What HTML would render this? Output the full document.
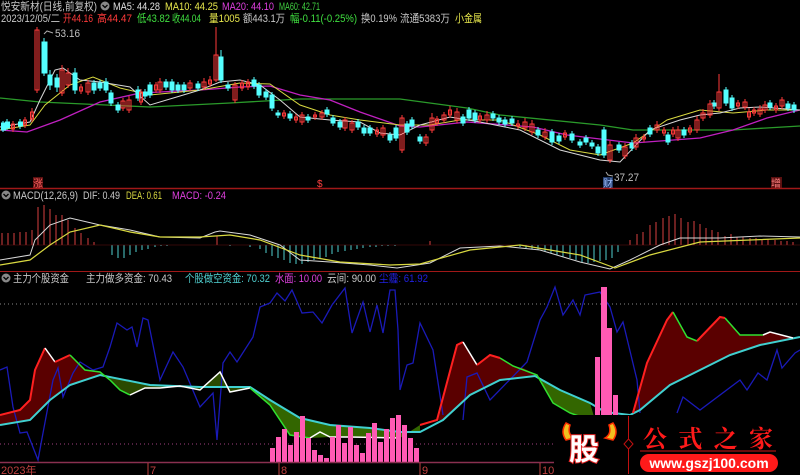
<!DOCTYPE html>
<html><head><meta charset="utf-8"><style>
html,body{margin:0;padding:0;background:#000;width:800px;height:475px;overflow:hidden}
svg{display:block}
text{font-family:"Liberation Sans","Noto Sans CJK SC",sans-serif}
</style></head><body>
<svg width="800" height="475" viewBox="0 0 800 475" xmlns="http://www.w3.org/2000/svg" font-size="11">
<rect width="800" height="475" fill="#000"/>
<!-- header -->
<g lengthAdjust="spacingAndGlyphs">
<text x="1" y="10" fill="#c8c8c8" textLength="96" lengthAdjust="spacingAndGlyphs">悦安新材(日线,前复权)</text>
<text x="113" y="10" fill="#e0e0e0" textLength="47" lengthAdjust="spacingAndGlyphs">MA5: 44.28</text>
<text x="165" y="10" fill="#e8e84c" textLength="53" lengthAdjust="spacingAndGlyphs">MA10: 44.25</text>
<text x="222" y="10" fill="#e040e0" textLength="52" lengthAdjust="spacingAndGlyphs">MA20: 44.10</text>
<text x="279" y="10" fill="#40d040" textLength="41" lengthAdjust="spacingAndGlyphs">MA60: 42.71</text>
<text x="1" y="22" fill="#c8c8c8" textLength="59" lengthAdjust="spacingAndGlyphs">2023/12/05/二</text>
<text x="63" y="22" fill="#ff3a3a" textLength="30" lengthAdjust="spacingAndGlyphs">开44.16</text>
<text x="97" y="22" fill="#ff3a3a" textLength="35" lengthAdjust="spacingAndGlyphs">高44.47</text>
<text x="137" y="22" fill="#40e040" textLength="33" lengthAdjust="spacingAndGlyphs">低43.82</text>
<text x="172" y="22" fill="#40e040" textLength="29" lengthAdjust="spacingAndGlyphs">收44.04</text>
<text x="209" y="22" fill="#e8e84c" textLength="31" lengthAdjust="spacingAndGlyphs">量1005</text>
<text x="243" y="22" fill="#c8c8c8" textLength="42" lengthAdjust="spacingAndGlyphs">额443.1万</text>
<text x="290" y="22" fill="#40e040" textLength="67" lengthAdjust="spacingAndGlyphs">幅-0.11(-0.25%)</text>
<text x="361" y="22" fill="#c8c8c8" textLength="36" lengthAdjust="spacingAndGlyphs">换0.19%</text>
<text x="400" y="22" fill="#c8c8c8" textLength="50" lengthAdjust="spacingAndGlyphs">流通5383万</text>
<text x="455" y="22" fill="#e8e84c" textLength="27" lengthAdjust="spacingAndGlyphs">小金属</text>
</g>
<circle cx="105" cy="6" r="4.5" fill="#888"/>
<path d="M102.5 5 L105 7.5 L107.5 5" stroke="#000" stroke-width="1.3" fill="none"/>
<!-- 53.16 -->
<path d="M44 34 L47 31 L53 33" stroke="#aaa" fill="none"/>
<text x="55" y="37" fill="#c0c0c0" textLength="25" lengthAdjust="spacingAndGlyphs">53.16</text>
<!-- MA lines -->
<polyline fill="none" stroke="#2a9a2a" stroke-width="1.3" points="0,98 40,102 150,107 230,103 300,99 400,99 467,108 500,115 600,125 633,130 733,130 800,126"/>
<polyline fill="none" stroke="#c020c0" stroke-width="1.3" points="0,130 27,132 60,120 100,102 140,93 200,90 240,87 270,86 300,95 330,100 360,112 400,126 420,127 467,122 533,127 567,135 633,143 700,138 733,130 767,118 800,110"/>
<polyline fill="none" stroke="#d8d840" stroke-width="1" points="0,130 30,125 45,105 70,85 93,77 120,88 150,95 200,90 240,83 270,84 300,105 330,115 360,120 400,125 430,125 460,120 500,120 540,135 570,150 600,155 633,143 667,120 700,110 733,113 767,110 800,110"/>
<polyline fill="none" stroke="#d8d8d8" stroke-width="1" points="0,127 30,122 40,100 55,70 63,68 80,80 100,82 130,87 150,105 180,96 200,90 220,82 240,80 260,85 280,100 300,117 330,120 360,122 380,133 400,135 420,125 450,117 480,122 520,130 560,150 600,160 620,162 650,130 680,120 700,115 720,113 740,108 760,107 800,110"/>
<!-- candles -->
<g stroke-width="1">
<g fill="#54ffff" stroke="#54ffff">
<path d="M3 121V132M7 119V130M20 119V129M44 38V76M50 70V90M57 74V92M75 68V94M94 80V94M100 80V91M106 78V93M111 90V106M118 102V113M138 86V101M145 89V99M150 82V98M166 79V90M172 79V93M178 82V93M184 82V93M198 81V91M221 50V83M228 82V91M254 77V89M259 82V98M266 89V100M272 92V111M278 110V118M290 111V121M308 114V123M327 107V117M333 115V126M340 119V130M358 119V130M364 125V136M370 125V136M390 132V143M396 125V141M407 121V135M412 117V129M420 134V144M463 114V126M469 107V121M475 110V123M493 111V121M499 115V125M505 117V127M512 116V126M538 127V138M552 129V145M559 133V144M572 131V143M580 139V148M586 135V145M592 140V149M598 144V156M604 127V158M619 142V153M632 140V151M650 125V137M668 132V145M684 127V138M714 100V109M726 87V106M732 95V111M770 100V110M788 101V111M794 102V113"/>
<rect x="1.5" y="123" width="4" height="7"/><rect x="5.5" y="122" width="4" height="6"/><rect x="18.5" y="122" width="4" height="4"/>
<rect x="42" y="42" width="5" height="31"/><rect x="48" y="75" width="4" height="10"/><rect x="55" y="78" width="4" height="9"/><rect x="73" y="73" width="4" height="17"/>
<rect x="92" y="83" width="4" height="7"/><rect x="98" y="83" width="4" height="5"/><rect x="104" y="82" width="4" height="8"/><rect x="109" y="93" width="4" height="10"/><rect x="116" y="105" width="4" height="5"/>
<rect x="136" y="90" width="4" height="8"/><rect x="143" y="92" width="4" height="4"/><rect x="148" y="85" width="4" height="10"/><rect x="164" y="82" width="4" height="5"/><rect x="170" y="82" width="4" height="8"/><rect x="176" y="85" width="4" height="5"/><rect x="182" y="85" width="4" height="5"/><rect x="196" y="84" width="4" height="4"/>
<rect x="219" y="57" width="4" height="23"/><rect x="226" y="85" width="4" height="3"/><rect x="252" y="80" width="4" height="6"/><rect x="257" y="85" width="4" height="10"/><rect x="264" y="92" width="4" height="5"/><rect x="270" y="95" width="4" height="13"/><rect x="276" y="113" width="4" height="2"/><rect x="288" y="114" width="4" height="4"/>
<rect x="306" y="117" width="4" height="3"/><rect x="325" y="110" width="4" height="4"/><rect x="331" y="118" width="4" height="5"/><rect x="338" y="122" width="4" height="5"/><rect x="356" y="122" width="4" height="5"/><rect x="362" y="128" width="4" height="5"/><rect x="368" y="128" width="4" height="5"/><rect x="388" y="135" width="4" height="5"/><rect x="394" y="128" width="4" height="10"/>
<rect x="405" y="124" width="4" height="8"/><rect x="410" y="120" width="4" height="6"/><rect x="418" y="137" width="4" height="4"/><rect x="461" y="117" width="4" height="6"/><rect x="467" y="110" width="4" height="8"/><rect x="473" y="113" width="4" height="7"/><rect x="491" y="114" width="4" height="4"/><rect x="497" y="118" width="4" height="4"/><rect x="503" y="120" width="4" height="4"/><rect x="510" y="119" width="4" height="4"/>
<rect x="536" y="130" width="4" height="5"/><rect x="550" y="132" width="4" height="10"/><rect x="557" y="136" width="4" height="5"/><rect x="570" y="134" width="4" height="6"/><rect x="578" y="142" width="4" height="3"/><rect x="584" y="138" width="4" height="4"/><rect x="590" y="143" width="4" height="3"/><rect x="596" y="147" width="4" height="6"/><rect x="602" y="130" width="4" height="25"/>
<rect x="617" y="145" width="4" height="5"/><rect x="630" y="143" width="4" height="5"/><rect x="648" y="128" width="4" height="6"/><rect x="666" y="135" width="4" height="7"/><rect x="682" y="130" width="4" height="5"/><rect x="712" y="103" width="4" height="3"/><rect x="724" y="90" width="4" height="13"/><rect x="730" y="98" width="4" height="10"/><rect x="768" y="103" width="4" height="4"/><rect x="786" y="104" width="4" height="4"/><rect x="792" y="105" width="4" height="5"/>
</g>
<g fill="none" stroke="#ff3a3a">
<path d="M13 121V132M25 117V128M32 108V122M37 27V93M62 65V96M68 68V88M81 84V94M88 80V95M123 98V111M129 96V113M141 89V105M156 82V93M160 78V93M190 80V91M204 78V90M210 76V87M216 27V82M235 82V103M242 80V91M248 79V90M284 110V119M296 114V123M302 112V125M315 112V120M322 110V120M345 117V131M352 120V133M377 127V137M383 125V138M402 115V153M426 134V146M432 113V133M437 116V126M444 112V123M450 106V118M457 108V123M480 113V123M487 111V123M518 120V129M525 118V131M532 120V135M545 128V140M565 130V140M610 141V163M625 143V159M636 134V150M644 134V142M657 121V133M664 127V136M673 127V137M678 126V141M690 125V135M697 116V133M703 109V121M710 100V118M719 74V111M738 100V109M745 99V110M749 108V120M754 107V116M760 105V117M765 101V113M776 103V113M782 97V109"/>
<rect x="11.5" y="124" width="3" height="5"/><rect x="23.5" y="120" width="3" height="5"/><rect x="30.5" y="112" width="3" height="7"/><rect x="35" y="30" width="4" height="60"/><rect x="60" y="70" width="4" height="23"/><rect x="66" y="73" width="4" height="12"/><rect x="79.5" y="87" width="3" height="4"/><rect x="86" y="83" width="4" height="9"/><rect x="121" y="101" width="4" height="7"/><rect x="127" y="100" width="4" height="10"/><rect x="139.5" y="92" width="3" height="10"/><rect x="154.5" y="85" width="3" height="5"/><rect x="158" y="82" width="4" height="8"/><rect x="188" y="83" width="4" height="5"/><rect x="202" y="82" width="4" height="5"/><rect x="208.5" y="80" width="3" height="4"/><rect x="214" y="55" width="4" height="25"/><rect x="233" y="85" width="4" height="15"/><rect x="240.5" y="83" width="3" height="5"/><rect x="246.5" y="82" width="3" height="5"/><rect x="282.5" y="113" width="3" height="3"/><rect x="294.5" y="117" width="3" height="3"/><rect x="300" y="115" width="4" height="7"/><rect x="313.5" y="115" width="3" height="2"/><rect x="320" y="113" width="4" height="4"/><rect x="343" y="120" width="4" height="8"/><rect x="350" y="123" width="4" height="7"/><rect x="375.5" y="130" width="3" height="4"/><rect x="381" y="128" width="4" height="7"/>
<rect x="400" y="118" width="4" height="32"/><rect x="424" y="137" width="4" height="6"/><rect x="430" y="118" width="4" height="12"/><rect x="435.5" y="119" width="3" height="4"/><rect x="442" y="115" width="4" height="5"/><rect x="448.5" y="110" width="3" height="5"/><rect x="455" y="112" width="4" height="8"/><rect x="478.5" y="116" width="3" height="4"/><rect x="485" y="115" width="4" height="5"/><rect x="516.5" y="124" width="3" height="2"/><rect x="523" y="122" width="4" height="6"/><rect x="530" y="124" width="4" height="8"/><rect x="543" y="132" width="4" height="5"/><rect x="563.5" y="133" width="3" height="4"/><rect x="608" y="145" width="4" height="15"/><rect x="623" y="147" width="4" height="9"/><rect x="634" y="138" width="4" height="9"/><rect x="642.5" y="137" width="3" height="2"/><rect x="655" y="125" width="4" height="5"/><rect x="662.5" y="130" width="3" height="3"/><rect x="671.5" y="130" width="3" height="4"/><rect x="676" y="130" width="4" height="8"/><rect x="688.5" y="128" width="3" height="4"/><rect x="695" y="120" width="4" height="10"/><rect x="701" y="113" width="4" height="5"/><rect x="708" y="104" width="4" height="11"/><rect x="717" y="92" width="4" height="16"/><rect x="736.5" y="103" width="3" height="3"/><rect x="743" y="102" width="4" height="5"/><rect x="747.5" y="112" width="3" height="5"/><rect x="752.5" y="110" width="3" height="3"/><rect x="758" y="109" width="4" height="5"/><rect x="763" y="105" width="4" height="5"/><rect x="774.5" y="106" width="3" height="4"/><rect x="780" y="100" width="4" height="6"/>
</g>
</g>
<path d="M606 172 L608 175 L613 176" stroke="#aaa" fill="none"/>
<text x="614" y="181" fill="#c0c0c0" textLength="25" lengthAdjust="spacingAndGlyphs">37.27</text>
<!-- markers -->
<rect x="33" y="177" width="10" height="11" fill="#5a1010"/><text x="33" y="187" fill="#ff6060" font-size="10">涨</text>
<text x="317" y="187" fill="#ff4040" font-size="10">$</text>
<rect x="603" y="177" width="10" height="11" fill="#203a6a"/><text x="603" y="187" fill="#a0c0ff" font-size="10">财</text>
<rect x="771" y="177" width="11" height="11" fill="#5a1010"/><text x="771" y="187" fill="#ff8080" font-size="10">增</text>
<!-- separators -->
<line x1="0" y1="188.5" x2="800" y2="188.5" stroke="#a01818" stroke-width="1.5"/>
<line x1="0" y1="271.5" x2="800" y2="271.5" stroke="#a01818" stroke-width="1"/>
<!-- MACD -->
<circle cx="6" cy="195" r="4.5" fill="#888"/><path d="M3.5 194 L6 196.5 L8.5 194" stroke="#000" stroke-width="1.3" fill="none"/>
<text x="13" y="199" fill="#c8c8c8" textLength="65" lengthAdjust="spacingAndGlyphs">MACD(12,26,9)</text>
<text x="83" y="199" fill="#c8c8c8" textLength="37" lengthAdjust="spacingAndGlyphs">DIF: 0.49</text>
<text x="126" y="199" fill="#d8d840" textLength="36" lengthAdjust="spacingAndGlyphs">DEA: 0.61</text>
<text x="172" y="199" fill="#e040e0" textLength="54" lengthAdjust="spacingAndGlyphs">MACD: -0.24</text>
<g stroke="#d84040" stroke-width="1">
<path d="M2 245V233M8 245V233M14 245V233M20 245V232M26 245V232M32 245V230M38 245V207M44 245V205M50 245V209M56 245V215M62 245V215M68 245V220M75 245V228M81 245V233M88 245V238M94 245V242M217 245V236M430 245V241M630 245V240M637 245V234M643 245V232M650 245V225M656 245V222M663 245V218M669 245V216M675 245V214M681 245V218M688 245V222M694 245V221M700 245V224M706 245V228M712 245V230M718 245V232M725 245V236M731 245V234M737 245V237M743 245V237M750 245V238M756 245V238M762 245V239M768 245V239M775 245V240M781 245V241M787 245V241M793 245V242"/>
</g>
<g stroke="#50d0d0" stroke-width="1">
<path d="M112 245V255M118 245V258M124 245V258M130 245V255M136 245V252M142 245V250M148 245V249M155 245V247M161 245V246M167 245V246M230 245V246M250 245V247M260 245V249M266 245V253M272 245V256M278 245V258M284 245V260M290 245V263M296 245V264M302 245V264M308 245V262M314 245V260M320 245V258M326 245V257M332 245V254M338 245V252M345 245V251M351 245V250M357 245V249M363 245V248M370 245V247M376 245V247M382 245V246M388 245V246M395 245V246M520 245V247M526 245V248M532 245V249M538 245V250M545 245V251M551 245V253M557 245V255M563 245V257M570 245V258M576 245V260M582 245V262M588 245V263M594 245V262M600 245V261M606 245V260M612 245V258M618 245V252"/>
</g>
<line x1="0" y1="245" x2="800" y2="245" stroke="#6a1010" stroke-width="0.6"/>
<polyline fill="none" stroke="#d8d8d8" stroke-width="1" points="0,260 30,255 35,240 50,225 70,218 100,225 130,230 160,237 200,238 215,232 220,231 250,235 280,245 300,260 330,262 370,265 397,268 430,263 460,248 500,246 540,250 580,262 610,269 630,260 660,245 680,238 720,238 760,236 800,237"/>
<polyline fill="none" stroke="#d8d840" stroke-width="1.2" points="0,265 30,260 50,245 70,232 100,225 130,232 160,237 200,237 230,235 260,240 300,255 340,262 390,265 420,264 470,250 520,245 580,255 615,268 650,255 700,242 750,240 800,238"/>
<!-- bottom panel header -->
<circle cx="6" cy="278" r="4.5" fill="#888"/><path d="M3.5 277 L6 279.5 L8.5 277" stroke="#000" stroke-width="1.3" fill="none"/>
<text x="13" y="282" fill="#c8c8c8" textLength="56" lengthAdjust="spacingAndGlyphs">主力个股资金</text>
<text x="86" y="282" fill="#c8c8c8" textLength="86" lengthAdjust="spacingAndGlyphs">主力做多资金: 70.43</text>
<text x="185" y="282" fill="#50d0d0" textLength="85" lengthAdjust="spacingAndGlyphs">个股做空资金: 70.32</text>
<text x="275" y="282" fill="#e040e0" textLength="47" lengthAdjust="spacingAndGlyphs">水面: 10.00</text>
<text x="327" y="282" fill="#c8c8c8" textLength="49" lengthAdjust="spacingAndGlyphs">云间: 90.00</text>
<text x="379" y="282" fill="#2020e0" textLength="49" lengthAdjust="spacingAndGlyphs">尘霾: 61.92</text>
<line x1="0" y1="304" x2="800" y2="304" stroke="#888" stroke-dasharray="1,3"/>
<line x1="0" y1="444" x2="555" y2="444" stroke="#a04080" stroke-dasharray="1,3"/>
<!-- fills -->
<path d="M0,415 20,410 30,400 35,370 45,348 55,362 70,355 85,370 100,372 L100,375 70,385 50,400 30,420 0,425Z" fill="#5a0000"/>
<path d="M100,372 110,380 120,390 130,395 145,388 160,388 180,386 200,390 220,372 230,392 250,388 L200,387 150,385 100,375Z" fill="#2a4a00"/>
<path d="M250,388 270,405 290,435 310,438 330,437 400,438 420,425 L420,432 400,432 370,428 330,425 300,418 270,400 250,387Z" fill="#336600"/>
<path d="M437,420 457,345 463,342 477,365 490,355 500,358 513,366 523,368 537,375 L500,380 470,395 443,420Z" fill="#5a0000"/>
<path d="M537,375 553,403 570,413 595,420 L590,403 560,390 537,376Z" fill="#336600"/>
<path d="M633,413 647,363 667,320 673,312 687,337 697,341 720,317 725,318 740,335 763,335 770,332 793,338 L800,337 760,345 730,355 700,370 670,385 640,410Z" fill="#5a0000"/>
<!-- blue line -->
<polyline fill="none" stroke="#1a1ab8" stroke-width="1.3" points="0,370 7,367 13,407 20,433 27,432 38,460 43,433 53,380 58,368 63,397 73,373 80,362 93,370 103,367 110,347 117,323 127,330 132,327 137,347 143,318 148,320 160,380 173,352 183,367 200,407 213,393 217,440 223,363 230,352 237,362 253,337 260,307 270,303 277,293 285,301 292,290 302,313 313,312 322,323 332,305 345,288 352,333 363,302 370,332 377,305 383,333 390,290 395,290 398,330 400,390 407,365 413,363 420,323 433,350 443,415"/>
<polyline fill="none" stroke="#1a1ab8" stroke-width="1.3" points="463,420 467,377 477,373 490,400 527,362 540,320 547,307 555,287 563,315 573,300 580,315 585,295 600,292 610,307 617,332 623,322 637,380 640,413"/>
<polyline fill="none" stroke="#1a1ab8" stroke-width="1.3" points="677,413 683,397 700,410 740,380 747,390 758,373 767,380 777,350 782,368 795,353 800,350"/>
<!-- cyan line -->
<polyline fill="none" stroke="#40d0d0" stroke-width="2" points="0,425 30,420 50,400 70,385 100,375 150,385 200,387 250,387 270,400 300,418 330,425 370,428 400,432 420,432 443,420 470,395 500,380 535,376 560,390 590,403 605,412 630,415 640,410 670,385 700,370 730,355 760,345 800,337"/>
<!-- upper line -->
<polyline fill="none" stroke="#ff2020" stroke-width="2" points="0,415 20,410 30,400 35,370 45,348"/>
<polyline fill="none" stroke="#ffffff" stroke-width="1.5" points="45,348 55,362"/>
<polyline fill="none" stroke="#ff2020" stroke-width="2" points="55,362 70,355"/>
<polyline fill="none" stroke="#30e030" stroke-width="1.5" points="70,355 85,370 100,372 110,380 120,390 130,395"/>
<polyline fill="none" stroke="#ffffff" stroke-width="1.5" points="130,395 145,388 160,388 180,386 200,390 220,372 230,392 250,388"/>
<polyline fill="none" stroke="#30e030" stroke-width="1.5" points="250,388 270,405 290,435 310,438"/>
<polyline fill="none" stroke="#ffffff" stroke-width="1.5" points="310,438 320,432 330,437 350,437 400,438"/>
<polyline fill="none" stroke="#ff2020" stroke-width="2" points="420,425 437,420 457,345 463,342"/>
<polyline fill="none" stroke="#ffffff" stroke-width="1.5" points="463,342 477,365"/>
<polyline fill="none" stroke="#ff2020" stroke-width="2" points="477,365 490,355 500,358"/>
<polyline fill="none" stroke="#30e030" stroke-width="1.5" points="500,358 513,366 537,375 553,403 570,413 590,420"/>
<polyline fill="none" stroke="#ff2020" stroke-width="2" points="633,413 647,363 667,320 673,312"/>
<polyline fill="none" stroke="#30e030" stroke-width="1.5" points="673,312 687,337 697,341"/>
<polyline fill="none" stroke="#ff2020" stroke-width="2" points="697,341 720,317 725,318"/>
<polyline fill="none" stroke="#30e030" stroke-width="1.5" points="725,318 740,335 763,335"/>
<polyline fill="none" stroke="#ffffff" stroke-width="1.5" points="763,335 770,332 793,338"/>
<!-- pink bars -->
<g fill="#ff5ab4">
<rect x="270" y="448" width="5" height="14"/><rect x="276" y="437" width="5" height="25"/><rect x="282" y="429" width="5" height="33"/><rect x="288" y="445" width="5" height="17"/><rect x="294" y="432" width="5" height="30"/><rect x="300" y="416" width="5" height="46"/><rect x="306" y="438" width="5" height="24"/><rect x="312" y="450" width="5" height="12"/><rect x="318" y="455" width="5" height="7"/><rect x="324" y="458" width="5" height="4"/><rect x="330" y="437" width="5" height="25"/><rect x="336" y="425" width="5" height="37"/><rect x="342" y="443" width="5" height="19"/><rect x="348" y="427" width="5" height="35"/><rect x="354" y="445" width="5" height="17"/><rect x="360" y="453" width="5" height="9"/><rect x="366" y="433" width="5" height="29"/><rect x="372" y="423" width="5" height="39"/><rect x="378" y="442" width="5" height="20"/><rect x="384" y="429" width="5" height="33"/><rect x="390" y="418" width="5" height="44"/><rect x="396" y="415" width="5" height="47"/><rect x="402" y="425" width="5" height="37"/><rect x="408" y="438" width="5" height="24"/><rect x="414" y="448" width="5" height="14"/>
<rect x="595" y="357" width="5" height="60"/><rect x="601" y="287" width="6" height="130"/><rect x="607" y="328" width="5" height="89"/><rect x="613" y="395" width="5" height="22"/>
</g>
<!-- axis -->
<line x1="0" y1="462.5" x2="555" y2="462.5" stroke="#8a3050" stroke-width="1.5"/>
<text x="1" y="474" fill="#c04040">2023年</text>
<line x1="148" y1="463" x2="148" y2="475" stroke="#c04040"/><text x="150" y="474" fill="#c04040">7</text>
<line x1="279" y1="463" x2="279" y2="475" stroke="#c04040"/><text x="281" y="474" fill="#c04040">8</text>
<line x1="420" y1="463" x2="420" y2="475" stroke="#c04040"/><text x="422" y="474" fill="#c04040">9</text>
<line x1="540" y1="463" x2="540" y2="475" stroke="#c04040"/><text x="542" y="474" fill="#c04040">10</text>
<!-- logo -->
<rect x="554" y="415" width="246" height="60" fill="#000"/>
<path d="M566 423 Q560 432 566 440 L574 438 Q567 434 570 425Z" fill="#f0c020" stroke="#ff3000" stroke-width="1.5"/>
<path d="M613 423 Q619 432 613 440 L605 438 Q612 434 609 425Z" fill="#f0c020" stroke="#ff3000" stroke-width="1.5"/>
<text x="569" y="460" fill="#fff" stroke="#e02020" stroke-width="2" paint-order="stroke" font-size="30" font-weight="bold" style="font-family:'Noto Sans CJK SC',sans-serif">股</text>
<line x1="628.5" y1="416" x2="628.5" y2="474" stroke="#c01010"/>
<path d="M628.5 439 L633 444 L628.5 449 L624 444Z" fill="#000" stroke="#c01010"/>
<text x="643" y="447" fill="#ff1a1a" font-size="24" font-weight="bold" textLength="130" lengthAdjust="spacing" style="font-family:'Noto Serif CJK SC',serif">公式之家</text>
<line x1="640" y1="451" x2="776" y2="451" stroke="#8a1010" stroke-width="1.5"/>
<rect x="640" y="454" width="138" height="18" rx="9" fill="#ff1a1a"/>
<text x="709" y="468" fill="#fff" font-size="14" font-weight="bold" text-anchor="middle">www.gszj100.com</text>
</svg>
</body></html>
